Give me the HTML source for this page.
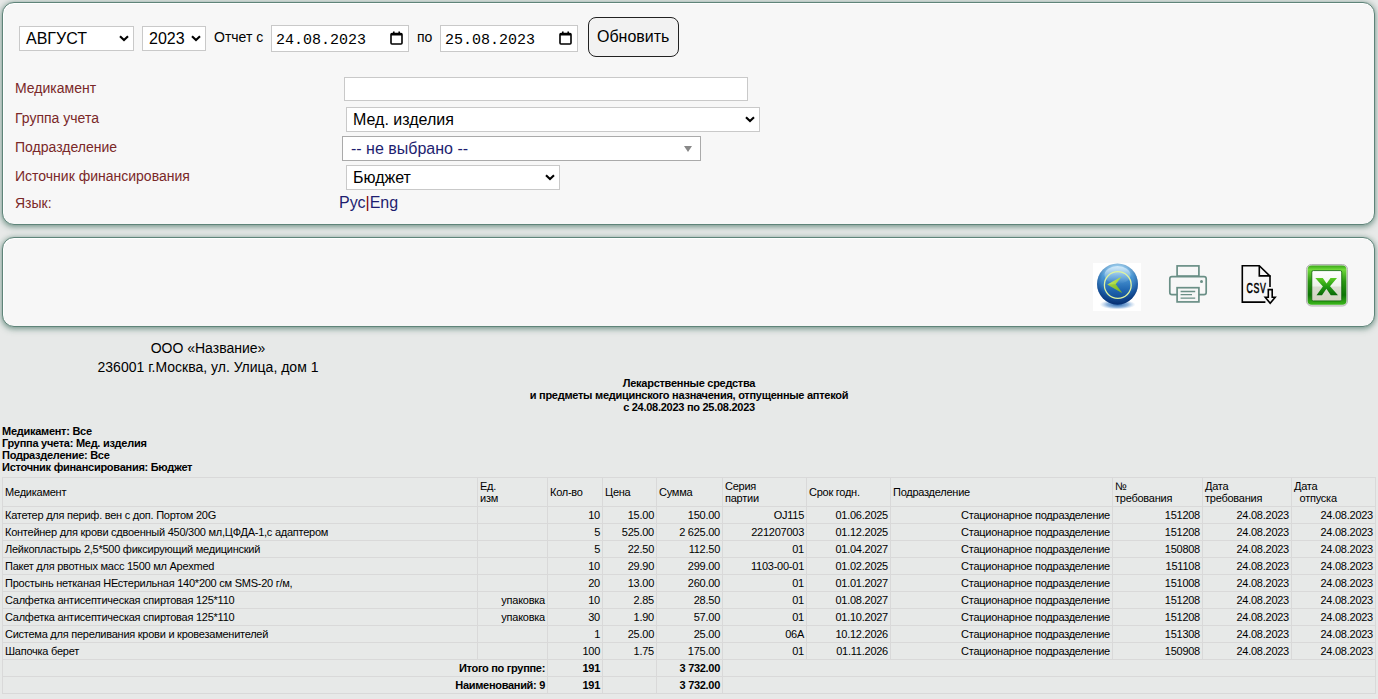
<!DOCTYPE html>
<html><head><meta charset="utf-8">
<style>
html,body{margin:0;padding:0;}
body{width:1378px;height:699px;overflow:hidden;background:#e7e9e8;font-family:"Liberation Sans",sans-serif;position:relative;color:#000;}
.panel{position:absolute;left:2px;width:1371px;background:#f7f7f7;border:1px solid #5f8479;border-radius:12px;box-shadow:0 2px 6px rgba(55,105,90,0.55), 0 0 5px rgba(55,105,90,0.3), inset 1px 1px 0 #fff;}
#p1{top:2px;height:221px;}
#p2{top:237px;height:88px;}
.abs{position:absolute;}
.sel{position:absolute;background:#fff;border:1px solid #c9c9c9;box-sizing:border-box;font-size:16px;color:#000;}
.sel span{position:absolute;left:6px;top:3px;}
.chev{position:absolute;width:10px;height:7px;}
.date{position:absolute;background:#fff;border:1px solid #c9c9c9;box-sizing:border-box;font-family:"Liberation Mono",monospace;font-size:15px;}
.date span{position:absolute;left:4px;top:6px;}
.cal{position:absolute;top:5px;width:13px;height:14px;}
.lbl{position:absolute;left:15px;font-size:14px;color:#7a2828;}
.btn{position:absolute;left:588px;top:17px;width:91px;height:40px;box-sizing:border-box;border:1px solid #222;border-radius:8px;background:#f2f2f2;font-size:16px;}
.btn span{position:absolute;left:8px;top:10px;}
#rep{position:absolute;left:0;top:0;}
table.t{position:absolute;left:2px;top:477px;border-collapse:collapse;table-layout:fixed;font-size:11px;line-height:12px;letter-spacing:-0.25px;}
table.t td{border:1px solid #d9d9d9;padding:2px 2px 2px 2px;vertical-align:middle;white-space:nowrap;overflow:hidden;}
table.t td.r{text-align:right;}
table.t tr.tot td{font-weight:bold;letter-spacing:-0.3px;}
</style></head><body>
<div class="panel" id="p1"></div>
<div class="panel" id="p2"></div>

<!-- top row -->
<div class="sel" style="left:19px;top:26px;width:115px;height:25px;"><span>АВГУСТ</span>
<svg class="chev" style="left:99px;top:8px" viewBox="0 0 10 7"><path d="M1 1.3 L5 5.1 L9 1.3" fill="none" stroke="#000" stroke-width="2.1"/></svg></div>
<div class="sel" style="left:142px;top:26px;width:64px;height:25px;"><span>2023</span>
<svg class="chev" style="left:48px;top:8px" viewBox="0 0 10 7"><path d="M1 1.3 L5 5.1 L9 1.3" fill="none" stroke="#000" stroke-width="2.1"/></svg></div>
<div class="abs" style="left:214px;top:29px;font-size:14px;">Отчет с</div>
<div class="date" style="left:271px;top:25px;width:138px;height:27px;"><span>24.08.2023</span>
<svg class="cal" style="left:118px" viewBox="0 0 13 14"><rect x="1" y="2.5" width="11" height="10.5" rx="1" fill="none" stroke="#000" stroke-width="1.6"/><rect x="1" y="2" width="11" height="2.5" fill="#000"/><rect x="3" y="0.5" width="1.6" height="2.5" fill="#000"/><rect x="8.4" y="0.5" width="1.6" height="2.5" fill="#000"/></svg></div>
<div class="abs" style="left:417px;top:29px;font-size:14px;">по</div>
<div class="date" style="left:440px;top:25px;width:138px;height:27px;"><span>25.08.2023</span>
<svg class="cal" style="left:118px" viewBox="0 0 13 14"><rect x="1" y="2.5" width="11" height="10.5" rx="1" fill="none" stroke="#000" stroke-width="1.6"/><rect x="1" y="2" width="11" height="2.5" fill="#000"/><rect x="3" y="0.5" width="1.6" height="2.5" fill="#000"/><rect x="8.4" y="0.5" width="1.6" height="2.5" fill="#000"/></svg></div>
<div class="btn"><span>Обновить</span></div>

<!-- form rows -->
<div class="lbl" style="top:80px;">Медикамент</div>
<div class="lbl" style="top:110px;">Группа учета</div>
<div class="lbl" style="top:139px;">Подразделение</div>
<div class="lbl" style="top:168px;">Источник финансирования</div>
<div class="lbl" style="top:195px;">Язык:</div>

<div class="abs" style="left:344px;top:77px;width:404px;height:24px;box-sizing:border-box;background:#fff;border:1px solid #c9c9c9;"></div>
<div class="sel" style="left:346px;top:107px;width:414px;height:25px;"><span>Мед. изделия</span>
<svg class="chev" style="left:398px;top:8px" viewBox="0 0 10 7"><path d="M1 1.3 L5 5.1 L9 1.3" fill="none" stroke="#000" stroke-width="2.1"/></svg></div>
<div class="sel" style="left:342px;top:136px;width:359px;height:25px;border-color:#aaa;color:#1e1e70;"><span style="left:8px">-- не выбрано --</span>
<svg style="position:absolute;left:341px;top:9px;width:8px;height:6px" viewBox="0 0 8 6"><path d="M0 0 L8 0 L4 6 Z" fill="#888"/></svg></div>
<div class="sel" style="left:346px;top:165px;width:214px;height:25px;"><span>Бюджет</span>
<svg class="chev" style="left:198px;top:8px" viewBox="0 0 10 7"><path d="M1 1.3 L5 5.1 L9 1.3" fill="none" stroke="#000" stroke-width="2.1"/></svg></div>
<div class="abs" style="left:339px;top:194px;font-size:16px;color:#1e1e70;">Рус<span style="color:#800000">|</span>Eng</div>

<!-- icons placeholder -->
<svg class="abs" style="left:1093px;top:263px" width="48" height="48" viewBox="0 0 48 48">
<defs>
<linearGradient id="ball" x1="0" y1="0" x2="0" y2="1"><stop offset="0" stop-color="#a6d8f5"/><stop offset="0.3" stop-color="#4f9cd8"/><stop offset="0.65" stop-color="#2066b0"/><stop offset="1" stop-color="#0b3c82"/></linearGradient><radialGradient id="edge" cx="0.5" cy="0.45" r="0.55"><stop offset="0.7" stop-color="#002060" stop-opacity="0"/><stop offset="1" stop-color="#002060" stop-opacity="0.45"/></radialGradient>
<radialGradient id="shd" cx="0.5" cy="0.5" r="0.5"><stop offset="0" stop-color="#1f5ea8" stop-opacity="1"/><stop offset="0.6" stop-color="#4a86c8" stop-opacity="0.6"/><stop offset="1" stop-color="#8ab4e0" stop-opacity="0"/></radialGradient>
<linearGradient id="arr" x1="0" y1="0" x2="1" y2="1"><stop offset="0" stop-color="#d4f26a"/><stop offset="1" stop-color="#7cbd22"/></linearGradient>
<linearGradient id="gloss" x1="0" y1="0" x2="0" y2="1"><stop offset="0" stop-color="#fff" stop-opacity="0.6"/><stop offset="1" stop-color="#fff" stop-opacity="0"/></linearGradient>
</defs>
<rect width="48" height="48" fill="#fff"/>
<ellipse cx="24.5" cy="41.5" rx="18" ry="5" fill="url(#shd)"/>
<circle cx="24.5" cy="21" r="20.5" fill="url(#ball)"/><circle cx="24.5" cy="21" r="20.5" fill="url(#edge)"/>
<ellipse cx="24.5" cy="12" rx="13" ry="9" fill="url(#gloss)"/>
<circle cx="24.8" cy="22" r="13.4" fill="none" stroke="#def3a0" stroke-width="1.3"/>
<path d="M14.3 21.6 L28.7 13.4 L22.7 21.3 L29.2 30.1 Z" fill="url(#arr)"/><path d="M14.3 21.6 L22.7 21.3 L29.2 30.1 Z" fill="#6aa81c" opacity="0.35"/>
</svg>
<svg class="abs" style="left:1165px;top:260px" width="46" height="46" viewBox="1165 260 46 46">
<g fill="none" stroke="#6a8f86" stroke-width="1.7">
<rect x="1177.1" y="265.9" width="21.8" height="10.2"/>
<rect x="1169.8" y="276.6" width="36.4" height="18" rx="2.2"/>
<rect x="1177.1" y="287.7" width="21.8" height="14.2" fill="#f6f6f6"/>
<path d="M1180.6 291.5 H1195.2 M1180.6 294.7 H1192 M1180.6 298.1 H1195.2" stroke-width="1.3"/>
</g>
<circle cx="1201.5" cy="281.4" r="1.5" fill="#6a8f86"/>
</svg>
<svg class="abs" style="left:1235px;top:260px" width="46" height="48" viewBox="1235 260 46 48">
<g fill="none" stroke="#000" stroke-width="1.6">
<path d="M1265.4 302.1 H1242.3 V265.8 H1259.3 L1270 276.2 V287"/>
<path d="M1259.3 265.8 V275.9 H1270.5"/>
<path d="M1268.3 289.6 H1272.2 V297.2 H1275.2 L1270.2 303.3 L1265.2 297.2 H1268.3 Z" stroke-width="1.6"/>
</g>
<text x="1246.6" y="293" font-family="Liberation Sans" font-weight="normal" font-size="14.6" letter-spacing="1" stroke="#000" stroke-width="0.55" transform="translate(1246.6 0) scale(0.6 1) translate(-1246.6 0)" fill="#000">CSV</text>
</svg>
<svg class="abs" style="left:1304px;top:262px" width="46" height="46" viewBox="1304 262 46 46">
<defs>
<linearGradient id="xg" x1="0" y1="0" x2="0" y2="1"><stop offset="0" stop-color="#7fe04a"/><stop offset="0.5" stop-color="#2c9a14"/><stop offset="1" stop-color="#1f7f0a"/></linearGradient>
<linearGradient id="xin" x1="0" y1="0" x2="0" y2="1"><stop offset="0" stop-color="#ffffff"/><stop offset="0.5" stop-color="#eef3ea"/><stop offset="0.55" stop-color="#d9ddd0"/><stop offset="1" stop-color="#d2d3c0"/></linearGradient>
<linearGradient id="xx" x1="0" y1="0" x2="0" y2="1"><stop offset="0" stop-color="#5ccc22"/><stop offset="0.5" stop-color="#229a12"/><stop offset="1" stop-color="#0a6806"/></linearGradient>
<linearGradient id="frame" x1="0" y1="0" x2="0" y2="1"><stop offset="0" stop-color="#3aa818"/><stop offset="0.1" stop-color="#6fd83a"/><stop offset="0.4" stop-color="#2a9612"/><stop offset="0.75" stop-color="#0e7406"/><stop offset="1" stop-color="#3cb81c"/></linearGradient>
</defs>
<rect x="1306.5" y="264.5" width="41" height="41.5" rx="5" fill="#e0e0e0" stroke="#b5b5b5" stroke-width="1"/>
<rect x="1307.6" y="265.6" width="38.8" height="39.2" rx="4" fill="url(#frame)"/>
<rect x="1311.8" y="270.6" width="29.9" height="30.3" rx="1.5" fill="url(#xin)" stroke="#0d6406" stroke-width="0.8"/>
<path d="M1315.3 278 H1322.8 L1326.6 283.6 L1330.5 278 H1337 L1330 286.3 L1338 295.2 H1330.8 L1326.4 288.8 L1322 295.2 H1316.5 L1322.9 286.5 Z" fill="url(#xx)"/>
</svg>

<!-- report header -->
<div class="abs" style="left:0;top:339px;width:416px;text-align:center;font-size:14px;line-height:19px;">ООО «Название»<br>236001 г.Москва, ул. Улица, дом 1</div>
<div class="abs" style="left:389px;top:377px;width:600px;text-align:center;font-size:11px;line-height:12px;font-weight:bold;letter-spacing:-0.27px;">Лекарственные средства<br>и предметы медицинского назначения, отпущенные аптекой<br>с 24.08.2023 по 25.08.2023</div>
<div class="abs" style="left:2px;top:425px;font-size:11px;line-height:12px;font-weight:bold;letter-spacing:-0.27px;">Медикамент: Все<br>Группа учета: Мед. изделия<br>Подразделение: Все<br>Источник финансирования: Бюджет</div>

<table class="t">
<colgroup><col style="width:475px"><col style="width:70px"><col style="width:55px"><col style="width:54px"><col style="width:66px"><col style="width:84px"><col style="width:84px"><col style="width:222px"><col style="width:90px"><col style="width:89px"><col style="width:84px"></colgroup>
<tr><td>Медикамент</td><td>Ед.<br>изм</td><td>Кол-во</td><td>Цена</td><td>Сумма</td><td>Серия<br>партии</td><td>Срок годн.</td><td>Подразделение</td><td>№<br>требования</td><td>Дата<br>требования</td><td>Дата<br>&nbsp;&nbsp;отпуска</td></tr>
<tr><td>Катетер для периф. вен с доп. Портом 20G</td><td class="r"></td><td class="r">10</td><td class="r">15.00</td><td class="r">150.00</td><td class="r">OJ115</td><td class="r">01.06.2025</td><td class="r">Стационарное подразделение</td><td class="r">151208</td><td class="r">24.08.2023</td><td class="r">24.08.2023</td></tr>
<tr><td>Контейнер для крови сдвоенный 450/300 мл,ЦФДА-1,с адаптером</td><td class="r"></td><td class="r">5</td><td class="r">525.00</td><td class="r">2 625.00</td><td class="r">221207003</td><td class="r">01.12.2025</td><td class="r">Стационарное подразделение</td><td class="r">151208</td><td class="r">24.08.2023</td><td class="r">24.08.2023</td></tr>
<tr><td>Лейкопластырь 2,5*500 фиксирующий медицинский</td><td class="r"></td><td class="r">5</td><td class="r">22.50</td><td class="r">112.50</td><td class="r">01</td><td class="r">01.04.2027</td><td class="r">Стационарное подразделение</td><td class="r">150808</td><td class="r">24.08.2023</td><td class="r">24.08.2023</td></tr>
<tr><td>Пакет для рвотных масс 1500 мл Apexmed</td><td class="r"></td><td class="r">10</td><td class="r">29.90</td><td class="r">299.00</td><td class="r">1103-00-01</td><td class="r">01.02.2025</td><td class="r">Стационарное подразделение</td><td class="r">151108</td><td class="r">24.08.2023</td><td class="r">24.08.2023</td></tr>
<tr><td>Простынь нетканая НЕстерильная 140*200 см SMS-20 г/м,</td><td class="r"></td><td class="r">20</td><td class="r">13.00</td><td class="r">260.00</td><td class="r">01</td><td class="r">01.01.2027</td><td class="r">Стационарное подразделение</td><td class="r">151008</td><td class="r">24.08.2023</td><td class="r">24.08.2023</td></tr>
<tr><td>Салфетка антисептическая спиртовая 125*110</td><td class="r">упаковка</td><td class="r">10</td><td class="r">2.85</td><td class="r">28.50</td><td class="r">01</td><td class="r">01.08.2027</td><td class="r">Стационарное подразделение</td><td class="r">151208</td><td class="r">24.08.2023</td><td class="r">24.08.2023</td></tr>
<tr><td>Салфетка антисептическая спиртовая 125*110</td><td class="r">упаковка</td><td class="r">30</td><td class="r">1.90</td><td class="r">57.00</td><td class="r">01</td><td class="r">01.10.2027</td><td class="r">Стационарное подразделение</td><td class="r">151208</td><td class="r">24.08.2023</td><td class="r">24.08.2023</td></tr>
<tr><td>Система для переливания крови и кровезаменителей</td><td class="r"></td><td class="r">1</td><td class="r">25.00</td><td class="r">25.00</td><td class="r">06А</td><td class="r">10.12.2026</td><td class="r">Стационарное подразделение</td><td class="r">151308</td><td class="r">24.08.2023</td><td class="r">24.08.2023</td></tr>
<tr><td>Шапочка берет</td><td class="r"></td><td class="r">100</td><td class="r">1.75</td><td class="r">175.00</td><td class="r">01</td><td class="r">01.11.2026</td><td class="r">Стационарное подразделение</td><td class="r">150908</td><td class="r">24.08.2023</td><td class="r">24.08.2023</td></tr>
<tr class="tot"><td colspan="2" class="r">Итого по группе:</td><td class="r">191</td><td></td><td class="r">3 732.00</td><td colspan="6"></td></tr>
<tr class="tot"><td colspan="2" class="r">Наименований: 9</td><td class="r">191</td><td></td><td class="r">3 732.00</td><td colspan="6"></td></tr>
</table>
</body></html>
